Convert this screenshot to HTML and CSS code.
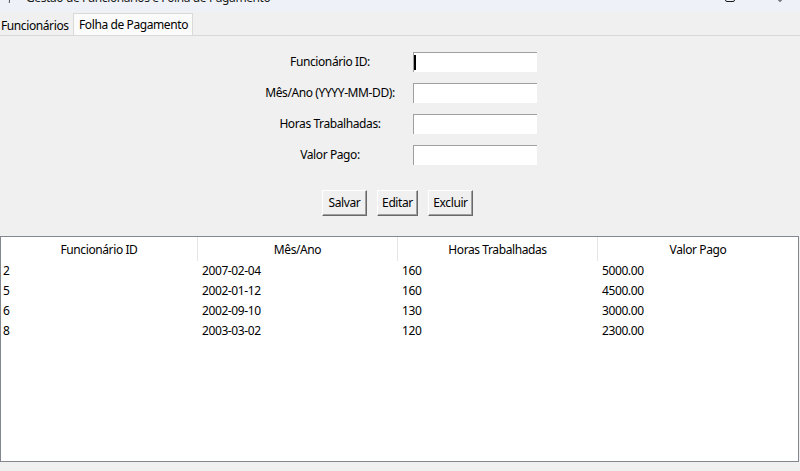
FILE: index.html
```html
<!DOCTYPE html>
<html lang="pt">
<head>
<meta charset="utf-8">
<title>Gestão de Funcionários e Folha de Pagamento</title>
<link rel="stylesheet" href="styles.css">
</head>
<body>
<div class="window">
  <div class="titlebar">
    <svg class="app-icon" width="20" height="12" viewBox="0 0 20 12">
      <path d="M9.5 -6 L10.2 -6 L9.6 3 L8.8 3 Z" fill="#1f2a36"/>
    </svg>
    <span class="title">Gestão de Funcionários e Folha de Pagamento</span>
    <div class="controls">
      <svg width="12" height="12" viewBox="0 0 12 12">
        <rect x="1.5" y="-8" width="9" height="9.5" rx="1.5" fill="none" stroke="#1b1b1b" stroke-width="1"/>
      </svg>
      <svg class="close" width="12" height="12" viewBox="0 0 12 12">
        <path d="M-3 -8 L6 1.5 M15 -8 L6 1.5" stroke="#1b1b1b" stroke-width="1" fill="none"/>
      </svg>
    </div>
  </div>

  <div class="tabs">
    <div class="tab">Funcionários</div>
    <div class="tab active">Folha de Pagamento</div>
  </div>

  <div class="pane">
    <div class="form">
      <label class="lbl">Funcionário ID:</label>
      <div class="entry"><span class="caret"></span></div>
      <label class="lbl">Mês/Ano (YYYY-MM-DD):</label>
      <div class="entry"></div>
      <label class="lbl">Horas Trabalhadas:</label>
      <div class="entry"></div>
      <label class="lbl">Valor Pago:</label>
      <div class="entry"></div>
    </div>

    <div class="buttons">
      <button class="btn w45">Salvar</button>
      <button class="btn w41">Editar</button>
      <button class="btn w45">Excluir</button>
    </div>

    <div class="tree">
      <div class="tree-head">
        <div class="th">Funcionário ID</div>
        <div class="th">Mês/Ano</div>
        <div class="th">Horas Trabalhadas</div>
        <div class="th">Valor Pago</div>
      </div>
      <div class="tree-row"><div class="td">2</div><div class="td">2007-02-04</div><div class="td">160</div><div class="td">5000.00</div></div>
      <div class="tree-row"><div class="td">5</div><div class="td">2002-01-12</div><div class="td">160</div><div class="td">4500.00</div></div>
      <div class="tree-row"><div class="td">6</div><div class="td">2002-09-10</div><div class="td">130</div><div class="td">3000.00</div></div>
      <div class="tree-row"><div class="td">8</div><div class="td">2003-03-02</div><div class="td">120</div><div class="td">2300.00</div></div>
    </div>
  </div>
</div>
</body>
</html>
```

FILE: styles.css
```css
* { box-sizing: border-box; }

html, body {
  margin: 0;
  padding: 0;
}

body {
  width: 800px;
  height: 471px;
  overflow: hidden;
  background: #f0f0f0;
  font-family: "Noto Sans", "Open Sans", sans-serif;
  font-size: 12px;
  letter-spacing: -0.4px;
  color: #000;
}

.window {
  width: 800px;
  height: 471px;
  display: flex;
  flex-direction: column;
}

/* title bar (cropped at top) */
.titlebar {
  height: 12px;
  flex: none;
  background: #eef2f8;
  display: flex;
  align-items: flex-start;
  overflow: hidden;
}

.app-icon {
  flex: none;
  display: block;
}

.title {
  margin-left: 6px;
  margin-top: -10px;
  line-height: 16px;
  font-size: 12px;
  letter-spacing: -0.4px;
  color: #1b1b1b;
  white-space: nowrap;
}

.controls {
  margin-left: auto;
  display: flex;
  padding-right: 14px;
}

.controls svg { display: block; margin-left: 38px; }

/* notebook tabs */
.tabs {
  height: 24px;
  flex: none;
  display: flex;
  align-items: flex-end;
  border-bottom: 1px solid #d9d9d9;
}

.tab {
  width: 73px;
  height: 19px;
  line-height: 20px;
  padding: 0 0 0 1px;
  white-space: nowrap;
}

.tab.active {
  height: 22px;
  line-height: 22px;
  width: 120px;
  padding: 0 0 0 5px;
  background: #fbfbfb;
  border: 1px solid #d9d9d9;
  border-bottom: none;
}

/* content pane */
.pane {
  flex: 1;
  display: flex;
  flex-direction: column;
}

.form {
  margin-top: 16px;
  align-self: center;
  margin-right: 3px;
  display: grid;
  grid-template-columns: 140px 124px;
  column-gap: 13px;
  row-gap: 11px;
}

.lbl {
  height: 20px;
  line-height: 20px;
  text-align: center;
  white-space: nowrap;
}

.entry {
  height: 20px;
  background: #fff;
  border-top: 1px solid #a0a0a0;
  border-left: 1px solid #a0a0a0;
  padding: 1px 0 0 0;
}

.caret {
  display: block;
  width: 2px;
  height: 15px;
  margin-top: 1px;
  background: #000;
}

.buttons {
  margin-top: 25px;
  align-self: center;
  margin-right: 5px;
  display: flex;
  gap: 10px;
}

.btn {
  height: 26px;
  padding: 0;
  font: inherit;
  letter-spacing: -0.4px;
  color: #000;
  background: #f0f0f0;
  border: 1px solid;
  border-color: #ffffff #696969 #696969 #ffffff;
  box-shadow: inset -1px -1px 0 #a0a0a0;
  line-height: 22px;
}

.w45 { width: 45px; }
.w41 { width: 41px; }

/* treeview */
.tree {
  margin-top: 20px;
  width: 799px;
  height: 226px;
  flex: none;
  background: #fff;
  border: 1px solid #828790;
}

.tree-head,
.tree-row {
  display: grid;
  grid-template-columns: 197px 200px 200px 200px;
}

.tree-head { height: 23px; }

.th {
  text-align: center;
  line-height: 23px;
  padding-top: 1px;
  border-right: 1px solid #e5e5e5;
  white-space: nowrap;
}

.th:last-child { border-right: none; }

.tree-row { height: 20px; }

.td {
  line-height: 20px;
  padding-top: 1px;
  padding-left: 4px;
  white-space: nowrap;
}

.td:first-child { padding-left: 2px; }
```
